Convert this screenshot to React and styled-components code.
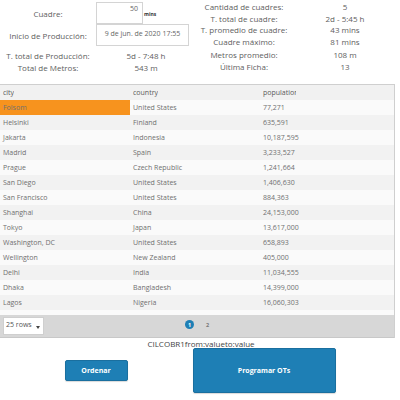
import React from 'react'
import styled, { createGlobalStyle } from 'styled-components'

const GlobalStyle = createGlobalStyle`
    body {
        margin: 0;
        background: #fff;
        font-family: "Open Sans", "Liberation Sans", sans-serif;
        color: #555;
    }
`

const BLUE = '#1e7fb5'
const ORANGE = '#f7931e'

const Page = styled.div`
    width: 400px;
    height: 400px;
    overflow: hidden;
`

const Summary = styled.div`
    display: flex;
    height: 84px;
`

const LeftStats = styled.div`
    display: grid;
    grid-template-columns: 96px 100px;
    grid-template-rows: 22px 22px 12px 12px;
    padding-top: 2px;
    width: 200px;
`

const StatLabel = styled.div`
    display: flex;
    align-items: center;
    justify-content: center;
    white-space: nowrap;
    font-size: 8px;
    color: #5e5e5e;
    margin-top: ${({ $shift }) => $shift || 0}px;
`

const StatValue = styled(StatLabel)``

const InputCell = styled.div`
    display: flex;
    align-items: flex-start;
`

const Field = styled.div`
    box-sizing: border-box;
    width: ${({ $w }) => $w}px;
    height: 22px;
    border: 1px solid #d4d4d4;
    background: #fff;
    font-size: 7px;
    color: #666;
    padding: ${({ $align }) => ($align === 'right' ? '1px 4px' : '4px 2px')};
    text-align: ${({ $align }) => $align};
    white-space: nowrap;
`

const Unit = styled.span`
    font-size: 5px;
    font-weight: 700;
    color: #333;
    margin: 9px 0 0 1px;
`

const RightStats = styled.div`
    display: grid;
    grid-template-columns: 92px 110px;
    grid-auto-rows: 11.5px;
    padding-top: 1px;
`

const Grid = styled.div`
    position: relative;
    width: 394px;
    border-top: 1px solid #cfcfcf;
    border-right: 1px solid #cfcfcf;
    background: #f1f1f1;
`

const HeaderRow = styled.div`
    display: grid;
    grid-template-columns: 130px 130px 131px;
    height: 15px;
    align-items: center;
    font-size: 7px;
    color: #5a5a5a;
`

const HeaderCell = styled.div`
    padding-left: 3px;
    overflow: hidden;
    & > span {
        display: inline-block;
        max-width: ${({ $clip }) => ($clip ? `${$clip}px` : 'none')};
        overflow: hidden;
        white-space: nowrap;
        vertical-align: top;
    }
`

const Body = styled.div`
    height: 215px;
    overflow: hidden;
`

const Row = styled.div`
    display: grid;
    grid-template-columns: 130px 130px 131px;
    height: 15px;
    align-items: center;
    background: ${({ $odd }) => ($odd ? '#f2f2f2' : '#fafafa')};
    font-size: 7px;
    color: #707070;
`

const Cell = styled.div`
    height: 100%;
    display: flex;
    align-items: center;
    padding-left: 3px;
    white-space: nowrap;
    background: ${({ $active }) => ($active ? ORANGE : 'transparent')};
`

const Footer = styled.div`
    position: relative;
    display: flex;
    align-items: center;
    height: 22px;
    background: #d7d7d7;
    border-bottom: 1px solid #c8c8c8;
    padding-left: 3px;
`

const RowsSelect = styled.div`
    box-sizing: border-box;
    width: 41px;
    height: 18px;
    background: #fff;
    border: 1px solid #cfcfcf;
    font-size: 7px;
    color: #555;
    display: flex;
    align-items: flex-start;
    justify-content: space-between;
    padding: 2px 3px 0 2px;
`

const Caret = styled.span`
    width: 0;
    height: 0;
    margin-top: 6px;
    border-left: 2.5px solid transparent;
    border-right: 2.5px solid transparent;
    border-top: 3px solid #444;
`

const Pager = styled.div`
    position: absolute;
    left: 185px;
    top: 5px;
    display: flex;
    align-items: center;
    gap: 9px;
`

const PageDot = styled.span`
    width: 9px;
    height: 9px;
    border-radius: 50%;
    background: ${({ $active }) => ($active ? BLUE : 'transparent')};
    color: ${({ $active }) => ($active ? '#fff' : '#777')};
    font-size: 5.5px;
    font-weight: 700;
    display: flex;
    align-items: center;
    justify-content: center;
`

const Caption = styled.div`
    text-align: center;
    font-size: 8px;
    color: #444;
    margin-top: 1px;
    height: 9px;
    line-height: 9px;
    padding-left: 2px;
`

const Actions = styled.div`
    display: flex;
    justify-content: center;
    align-items: center;
    gap: 65px;
    height: 45px;
`

const Button = styled.button`
    width: ${({ $w }) => $w}px;
    height: ${({ $h }) => $h}px;
    background: ${BLUE};
    border: 1px solid #1a6f9f;
    border-radius: 2px;
    color: #fff;
    font-family: "Open Sans", "Liberation Sans", sans-serif;
    font-weight: 700;
    font-size: 7px;
    box-shadow: 0 1px 1px rgba(0, 0, 0, 0.15);
    padding: 0;
`

const rows = [
    ['Folsom', 'United States', '77,271'],
    ['Helsinki', 'Finland', '635,591'],
    ['Jakarta', 'Indonesia', '10,187,595'],
    ['Madrid', 'Spain', '3,233,527'],
    ['Prague', 'Czech Republic', '1,241,664'],
    ['San Diego', 'United States', '1,406,630'],
    ['San Francisco', 'United States', '884,363'],
    ['Shanghai', 'China', '24,153,000'],
    ['Tokyo', 'Japan', '13,617,000'],
    ['Washington, DC', 'United States', '658,893'],
    ['Wellington', 'New Zealand', '405,000'],
    ['Delhi', 'India', '11,034,555'],
    ['Dhaka', 'Bangladesh', '14,399,000'],
    ['Lagos', 'Nigeria', '16,060,303'],
    ['Karachi', 'Pakistan', '14,910,352'],
]

const rightStats = [
    ['Cantidad de cuadres:', '5', 0],
    ['T. total de cuadre:', '2d - 5:45 h', 0],
    ['T. promedio de cuadre:', '43 mins', 0],
    ['Cuadre máximo:', '81 mins', 0],
    ['Metros promedio:', '108 m', 4],
    ['Última Ficha:', '13', 4],
]

export default function App() {
    return (
        <Page>
            <GlobalStyle />
            <Summary>
                <LeftStats>
                    <StatLabel>Cuadre:</StatLabel>
                    <InputCell>
                        <Field $w={47} $align="right">50</Field>
                        <Unit>mins</Unit>
                    </InputCell>
                    <StatLabel>Inicio de Producción:</StatLabel>
                    <InputCell>
                        <Field $w={93} $align="center">9 de jun. de 2020 17:55</Field>
                    </InputCell>
                    <StatLabel $shift={7}>T. total de Producción:</StatLabel>
                    <StatValue $shift={7}>5d - 7:48 h</StatValue>
                    <StatLabel $shift={7}>Total de Metros:</StatLabel>
                    <StatValue $shift={7}>543 m</StatValue>
                </LeftStats>
                <RightStats>
                    {rightStats.map(([label, value, shift]) => (
                        <React.Fragment key={label}>
                            <StatLabel $shift={shift}>{label}</StatLabel>
                            <StatValue $shift={shift}>{value}</StatValue>
                        </React.Fragment>
                    ))}
                </RightStats>
            </Summary>
            <Grid>
                <HeaderRow>
                    <HeaderCell><span>city</span></HeaderCell>
                    <HeaderCell><span>country</span></HeaderCell>
                    <HeaderCell $clip={33}><span>population</span></HeaderCell>
                </HeaderRow>
                <Body>
                    {rows.map((r, i) => (
                        <Row key={r[0]} $odd={i % 2 === 1}>
                            <Cell $active={i === 0}>{r[0]}</Cell>
                            <Cell>{r[1]}</Cell>
                            <Cell>{r[2]}</Cell>
                        </Row>
                    ))}
                </Body>
                <Footer>
                    <RowsSelect>
                        25 rows
                        <Caret />
                    </RowsSelect>
                    <Pager>
                        <PageDot $active>1</PageDot>
                        <PageDot>2</PageDot>
                    </Pager>
                </Footer>
            </Grid>
            <Caption>CILCOBR1from:valueto:value</Caption>
            <Actions>
                <Button $w={63} $h={21}>Ordenar</Button>
                <Button $w={143} $h={45}>Programar OTs</Button>
            </Actions>
        </Page>
    )
}
